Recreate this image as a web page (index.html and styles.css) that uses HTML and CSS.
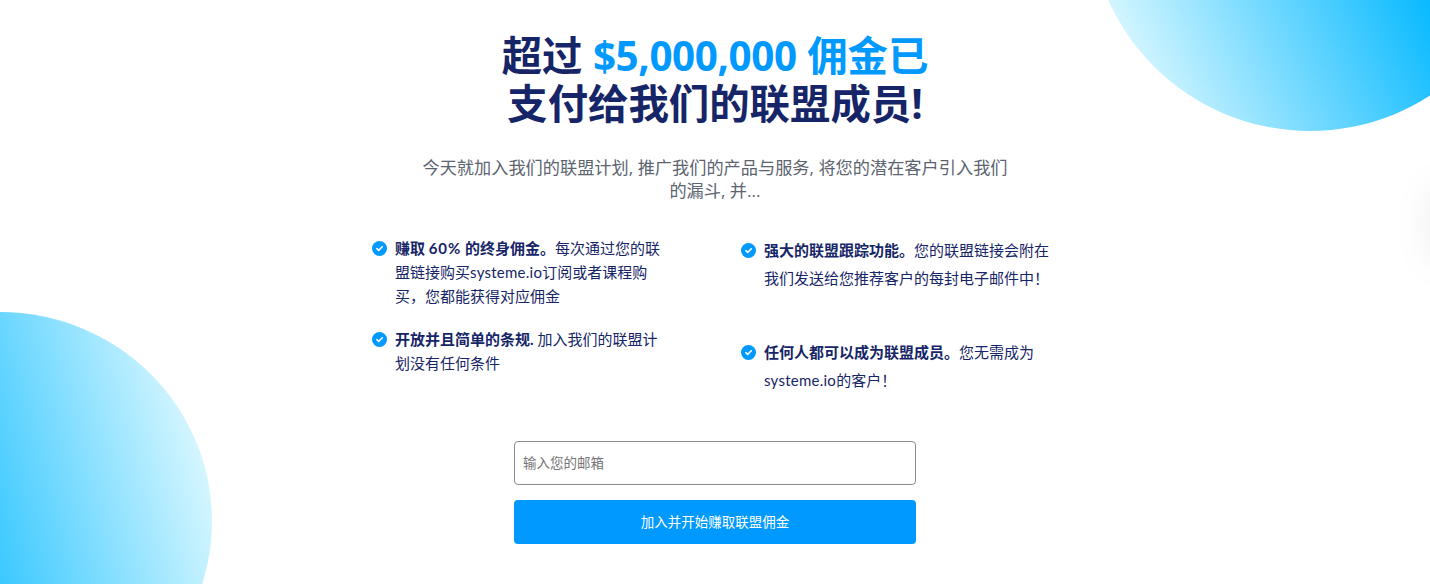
FILE: index.html
```html
<!DOCTYPE html>
<html lang="zh-CN">
<head>
    <meta charset="UTF-8">
    <meta name="viewport" content="width=device-width, initial-scale=1.0">
    <title>联盟计划</title>
    <link rel="stylesheet" href="styles.css">
</head>
<body>
    <section class="hero">
        <div class="circle circle-top"></div>
        <div class="circle circle-left"></div>
        <div class="edge-shadow"></div>

        <h1 class="title">
            <span class="line">超过 <span class="blue"><span class="amount">$5,000,000</span> 佣金已</span></span>
            <span class="line">支付给我们的联盟成员!</span>
        </h1>

        <p class="subtitle">
            <span class="line">今天就加入我们的联盟计划, 推广我们的产品与服务, 将您的潜在客户引入我们</span>
            <span class="line">的漏斗, 并...</span>
        </p>

        <div class="columns">
            <ul class="list list-left">
                <li>
                    <svg class="check" viewBox="0 0 15 15"><circle cx="7.5" cy="7.5" r="7.5" fill="#0099ff"/><path d="M4.9 7.7l1.8 1.7 3.6-3.6" fill="none" stroke="#fff" stroke-width="1.6" stroke-linecap="round" stroke-linejoin="round"/></svg>
                    <p><b>赚取 <span class="percent">60%</span> 的终身佣金。</b>每次通过您的联<br>盟链接购买<span class="latin">systeme.io</span>订阅或者课程购<br>买，您都能获得对应佣金</p>
                </li>
                <li>
                    <svg class="check" viewBox="0 0 15 15"><circle cx="7.5" cy="7.5" r="7.5" fill="#0099ff"/><path d="M4.9 7.7l1.8 1.7 3.6-3.6" fill="none" stroke="#fff" stroke-width="1.6" stroke-linecap="round" stroke-linejoin="round"/></svg>
                    <p><b>开放并且简单的条规.</b> 加入我们的联盟计<br>划没有任何条件</p>
                </li>
            </ul>
            <ul class="list list-right">
                <li>
                    <svg class="check" viewBox="0 0 15 15"><circle cx="7.5" cy="7.5" r="7.5" fill="#0099ff"/><path d="M4.9 7.7l1.8 1.7 3.6-3.6" fill="none" stroke="#fff" stroke-width="1.6" stroke-linecap="round" stroke-linejoin="round"/></svg>
                    <p><b>强大的联盟跟踪功能。</b>您的联盟链接会附在<br>我们发送给您推荐客户的每封电子邮件中！</p>
                </li>
                <li>
                    <svg class="check" viewBox="0 0 15 15"><circle cx="7.5" cy="7.5" r="7.5" fill="#0099ff"/><path d="M4.9 7.7l1.8 1.7 3.6-3.6" fill="none" stroke="#fff" stroke-width="1.6" stroke-linecap="round" stroke-linejoin="round"/></svg>
                    <p><b>任何人都可以成为联盟成员。</b>您无需成为<br><span class="latin">systeme.io</span>的客户！</p>
                </li>
            </ul>
        </div>

        <form class="signup">
            <input type="email" class="email" placeholder="输入您的邮箱">
            <button type="button" class="submit">加入并开始赚取联盟佣金</button>
        </form>
    </section>
</body>
</html>
```

FILE: styles.css
```css
* {
    box-sizing: border-box;
}

body {
    margin: 0;
    background-color: #fff;
    color: #162567;
    font-family: "Open Sans", "Noto Sans CJK SC", sans-serif;
}

.hero {
    position: relative;
    height: 584px;
    overflow: hidden;
    padding-top: 32px;
}

.circle {
    position: absolute;
    width: 424px;
    height: 424px;
    border-radius: 50%;
}

.circle-top {
    left: 1089px;
    top: -311px;
    width: 442px;
    height: 442px;
    background: linear-gradient(65deg, #dcf8ff 10%, #00b7ff 64%);
}

.circle-left {
    left: -212px;
    top: 312px;
    height: 418px;
    background: linear-gradient(255deg, #dcf8ff 7%, #00b7ff 70%);
}

.edge-shadow {
    position: absolute;
    right: -20px;
    top: 190px;
    width: 10px;
    height: 70px;
    box-shadow: 0 0 40px rgba(0, 0, 0, 0.22);
}

.line {
    display: block;
    white-space: nowrap;
}

.title {
    margin: 0;
    font-size: 40.4px;
    line-height: 48px;
    font-weight: 700;
    text-align: center;
}

.blue {
    color: #0099ff;
}

.amount {
    letter-spacing: -0.4px;
}

.subtitle {
    margin: 28px 0 0;
    color: #5c6470;
    font-size: 17.2px;
    line-height: 23px;
    text-align: center;
}

.columns {
    display: flex;
    width: 690px;
    height: 205px;
    margin: 34px auto 0;
    padding-left: 2px;
}

.list {
    flex: none;
    width: 369px;
    margin: 0;
    padding: 0;
    list-style: none;
    font-family: Lato, "Noto Sans CJK SC", sans-serif;
    font-size: 15px;
    white-space: nowrap;
}

.list li {
    display: flex;
    gap: 8px;
}

.list p {
    margin: 0;
}

.list-left {
    line-height: 24px;
}

.list-left li {
    margin-bottom: 19px;
}

.list-right {
    line-height: 28px;
}

.list-right li {
    margin-bottom: 46px;
}

.latin {
    letter-spacing: 0.25px;
}

.percent {
    letter-spacing: 1px;
}

.check {
    flex: none;
    width: 15px;
    height: 15px;
    margin-top: 5px;
}

.list-right .check {
    margin-top: 7px;
}

.signup {
    display: flex;
    flex-direction: column;
    gap: 15px;
    width: 402px;
    margin: 0 auto;
}

.email,
.submit {
    height: 44px;
    border-radius: 4px;
    font-family: "Open Sans", "Noto Sans CJK SC", sans-serif;
    font-size: 13.5px;
}

.email {
    padding: 0 8px;
    border: 1px solid #8b8b8b;
}

.submit {
    padding-bottom: 4px;
    border: none;
    background-color: #0099ff;
    color: #fff;
}
```
